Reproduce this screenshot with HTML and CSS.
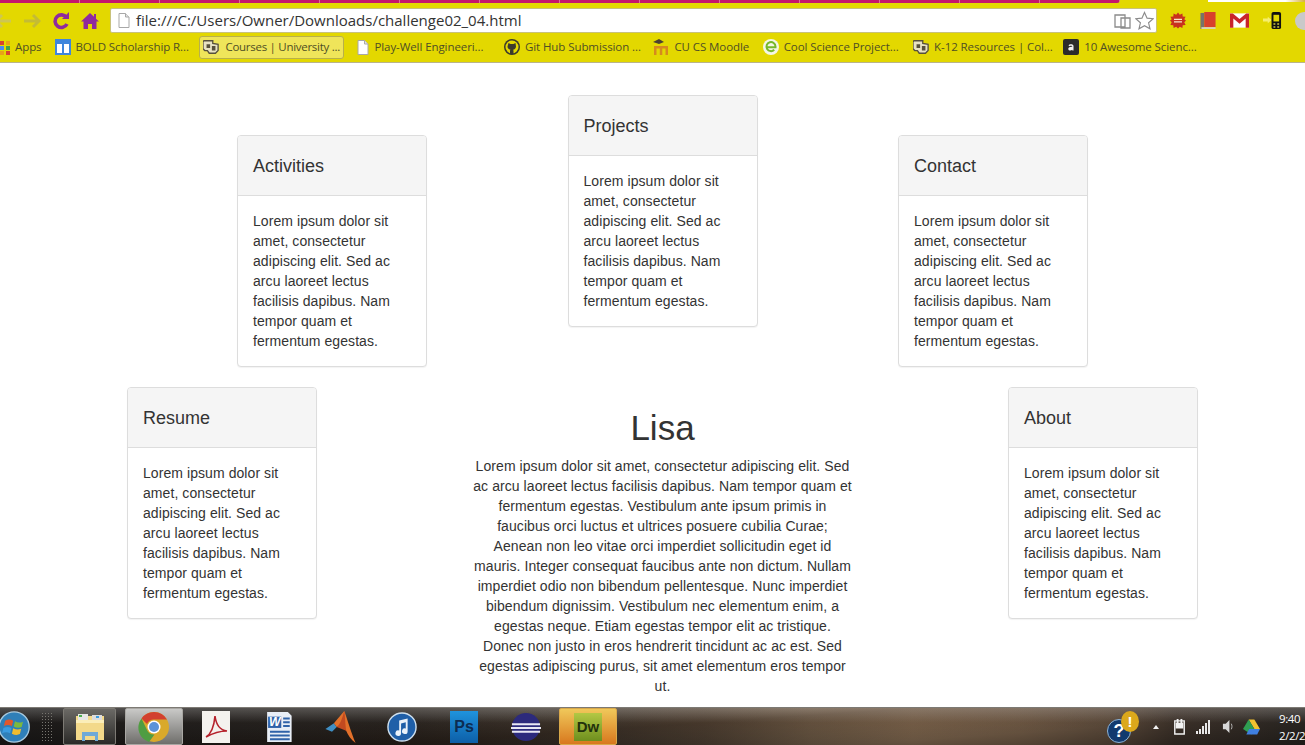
FILE: index.html
```html
<!DOCTYPE html>
<html lang="en">
<head>
  <meta charset="UTF-8" />
  <meta name="viewport" content="width=device-width, initial-scale=1.0" />
  <title>challenge02_04</title>
  <link rel="stylesheet" href="styles.css">
</head>
<body>

<div class="screen">

  <!-- browser chrome -->
  <header class="browser">
    <div class="tabstrip">
      <div class="tabs"></div>
      <div class="tab-corner"></div>
    </div>

    <div class="toolbar">
      <div class="nav-buttons">
        <svg class="nav-icon back" viewBox="0 0 18 16"><path d="M8 2 2 8l6 6M2 8h15" fill="none" stroke="#cdc652" stroke-width="3"/></svg>
        <svg class="nav-icon forward" viewBox="0 0 18 16"><path d="M10 2l6 6-6 6M16 8H1" fill="none" stroke="#c4bb34" stroke-width="3"/></svg>
        <svg class="nav-icon reload" viewBox="0 0 18 18"><path d="M14.5 5.5A6.3 6.3 0 1 0 15 12" fill="none" stroke="#8f2a9e" stroke-width="3.6"/><path d="M10 7h7V0z" fill="#8f2a9e"/></svg>
        <svg class="nav-icon home" viewBox="0 0 18 18"><path d="M9 1 0 9.500h2.500V17h4.500v-5h4v5h4.500V9.500H18L15 6.700V2h-2v2.800z" fill="#8f2a9e"/></svg>
      </div>

      <div class="omnibox">
        <svg class="doc-icon" viewBox="0 0 12 15"><path d="M1 .5h6.500L11 4v10.500H1z" fill="#fff" stroke="#a8a8a8"/><path d="M7.500.5V4H11" fill="#e4e4e4" stroke="#a8a8a8"/></svg>
        <span class="url">file:///C:/Users/Owner/Downloads/challenge02_04.html</span>
        <svg class="omni-icon" viewBox="0 0 17 16"><path d="M1 2h10v12H1zM7 5h9v10H7z" fill="#fff" stroke="#8b8b8b" stroke-width="1.300"/></svg>
        <svg class="omni-icon star" viewBox="0 0 20 19"><path d="M10 1l2.700 6 6.500.6-4.900 4.300 1.500 6.300L10 14.900 4.200 18.200l1.500-6.300L.8 7.600 7.300 7z" fill="#fff" stroke="#8b8b8b" stroke-width="1.200"/></svg>
      </div>

      <div class="extensions">
        <svg class="ext" viewBox="0 0 16 16"><path d="M8 0l1.800 2.300L12.400 1l.3 2.900 2.900.3-1.300 2.600L16 8l-1.700 1.800 1.300 2.600-2.900.3-.3 2.900-2.600-1.300L8 16l-1.800-1.700-2.600 1.300-.3-2.900-2.900-.3 1.300-2.600L0 8l1.700-1.200L.4 4.200l2.900-.3.3-2.900 2.600 1.300z" fill="#c8321e"/><path d="M4 6.200h8v1.300H4zM4 8.700h8V10H4z" fill="#f6e7c8"/></svg>
        <svg class="ext" viewBox="0 0 16 18"><path d="M0 1h4v17H0z" fill="#77726a"/><path d="M4 0h12v16H4z" fill="#d8402c"/><path d="M1 16h15v2H1z" fill="#d9d2b8"/></svg>
        <svg class="ext gmail" viewBox="0 0 20 15"><path d="M0 0h20v15H0z" fill="#fff"/><path d="M0 0h3l7 6 7-6h3v15h-3.500V5.500L10 11 3.500 5.500V15H0z" fill="#c9252b"/></svg>
        <svg class="ext phone" viewBox="0 0 20 20"><path d="M0 8h5V6l4 3.500L5 13v-2H0z" fill="#f5ee70"/><rect x="9" y="1" width="10" height="18" rx="2" fill="#111"/><path d="M11 4h6v7h-6z" fill="#e3d800"/><path d="M11 13h2v1.500h-2zM15 13h2v1.500h-2zM11 16h2v1.500h-2zM15 16h2v1.500h-2z" fill="#cfc640"/></svg>
        <div class="ext-cut"></div>
      </div>
    </div>

    <nav class="bookmarks">
      <a class="bookmark">
        <svg class="fav" viewBox="0 0 16 16"><path d="M0 2h4v4H0z" fill="#d8432f"/><path d="M6 2h4v4H6z" fill="#d8432f"/><path d="M12 2h4v4h-4z" fill="#e8a317"/><path d="M0 7h4v4H0z" fill="#4a8af0"/><path d="M6 7h4v4H6z" fill="#4a8af0"/><path d="M12 7h4v4h-4z" fill="#43a047"/><path d="M0 12h4v4H0z" fill="#e8a317"/><path d="M6 12h4v4H6z" fill="#e8a317"/><path d="M12 12h4v4h-4z" fill="#d8432f"/></svg>
        Apps
      </a>
      <a class="bookmark">
        <svg class="fav" viewBox="0 0 16 16"><path d="M0 0h16v16H0z" fill="#3f86dc"/><path d="M2 5h5v9H2zM9 5h5v9H9z" fill="#fff"/></svg>
        BOLD Scholarship R...
      </a>
      <a class="bookmark active">
        <svg class="fav" viewBox="0 0 18 16"><path d="M1 1h10v3l6 1v7l-3 3H7l-2-3H2L0 10V2z" fill="#e8e2c4" stroke="#57503c" stroke-width="1.500"/><path d="M4 5h4v4H4zM10 7h4v5h-4z" fill="#57503c"/></svg>
        Courses | University ...
      </a>
      <a class="bookmark">
        <svg class="fav small" viewBox="0 0 12 15"><path d="M1 .5h6.500L11 4v10.500H1z" fill="#fff" stroke="#a8a8a8"/><path d="M7.500.5V4H11" fill="#e4e4e4" stroke="#a8a8a8"/></svg>
        Play-Well Engineeri...
      </a>
      <a class="bookmark">
        <svg class="fav" viewBox="0 0 16 16"><circle cx="8" cy="8" r="8" fill="#3b3a2c"/><circle cx="8" cy="8" r="6.500" fill="#e3d800"/><path d="M4.500 4l2 1h3l2-1 .5 3.500c0 2-1.500 3-3 3.300l.5.700V15H6v-3.500l.5-.7c-1.500-.3-3-1.300-3-3.300z" fill="#3b3a2c"/></svg>
        Git Hub Submission ...
      </a>
      <a class="bookmark">
        <svg class="fav" viewBox="0 0 16 16"><path d="M0 3l6-3 5 3-5 2z" fill="#4a4032"/><path d="M1 7h14v9h-2.500V9.500H9.300V16H6.800V9.500H3.500V16H1z" fill="#d68a1e"/></svg>
        CU CS Moodle
      </a>
      <a class="bookmark">
        <svg class="fav" viewBox="0 0 16 16"><circle cx="8" cy="8" r="8" fill="#f4f6e6"/><path d="M3.500 8.300h9V7.500a4.500 4.500 0 1 0-1.300 3.300" fill="none" stroke="#76b82a" stroke-width="2"/></svg>
        Cool Science Project...
      </a>
      <a class="bookmark">
        <svg class="fav" viewBox="0 0 18 16"><path d="M1 1h10v3l6 1v7l-3 3H7l-2-3H2L0 10V2z" fill="#e8e2c4" stroke="#57503c" stroke-width="1.500"/><path d="M4 5h4v4H4zM10 7h4v5h-4z" fill="#57503c"/></svg>
        K-12 Resources | Col...
      </a>
      <a class="bookmark">
        <svg class="fav" viewBox="0 0 16 16"><rect width="16" height="16" rx="2" fill="#2b2b2b"/><path d="M5.500 6.500c.5-1.500 5-1.800 5 .5v4.500H9.300v-.7c-1 1.200-4 1.200-4-.8s2.500-2.200 4-2.200c0-1.300-1.800-1.300-2.700-.6z" fill="#f2f2f2"/></svg>
        10 Awesome Scienc...
      </a>
    </nav>
  </header>

  <!-- the page itself -->
  <main class="page">
    <div class="row top-row">
      <section class="panel lower">
        <div class="panel-heading">Activities</div>
        <div class="panel-body">Lorem ipsum dolor sit amet, consectetur adipiscing elit. Sed ac arcu laoreet lectus facilisis dapibus. Nam tempor quam et fermentum egestas.</div>
      </section>
      <section class="panel">
        <div class="panel-heading">Projects</div>
        <div class="panel-body">Lorem ipsum dolor sit amet, consectetur adipiscing elit. Sed ac arcu laoreet lectus facilisis dapibus. Nam tempor quam et fermentum egestas.</div>
      </section>
      <section class="panel lower">
        <div class="panel-heading">Contact</div>
        <div class="panel-body">Lorem ipsum dolor sit amet, consectetur adipiscing elit. Sed ac arcu laoreet lectus facilisis dapibus. Nam tempor quam et fermentum egestas.</div>
      </section>
    </div>

    <div class="row bottom-row">
      <section class="panel">
        <div class="panel-heading">Resume</div>
        <div class="panel-body">Lorem ipsum dolor sit amet, consectetur adipiscing elit. Sed ac arcu laoreet lectus facilisis dapibus. Nam tempor quam et fermentum egestas.</div>
      </section>
      <div class="intro">
        <h1>Lisa</h1>
        <p>Lorem ipsum dolor sit amet, consectetur adipiscing elit. Sed ac arcu laoreet lectus facilisis dapibus. Nam tempor quam et fermentum egestas. Vestibulum ante ipsum primis in faucibus orci luctus et ultrices posuere cubilia Curae; Aenean non leo vitae orci imperdiet sollicitudin eget id mauris. Integer consequat faucibus ante non dictum. Nullam imperdiet odio non bibendum pellentesque. Nunc imperdiet bibendum dignissim. Vestibulum nec elementum enim, a egestas neque. Etiam egestas tempor elit ac tristique. Donec non justo in eros hendrerit tincidunt ac ac est. Sed egestas adipiscing purus, sit amet elementum eros tempor ut.</p>
      </div>
      <section class="panel">
        <div class="panel-heading">About</div>
        <div class="panel-body">Lorem ipsum dolor sit amet, consectetur adipiscing elit. Sed ac arcu laoreet lectus facilisis dapibus. Nam tempor quam et fermentum egestas.</div>
      </section>
    </div>
  </main>

  <!-- windows taskbar -->
  <footer class="taskbar">
    <div class="start">
      <svg viewBox="0 0 36 36"><circle cx="17" cy="18" r="17" fill="#2f7fb8" stroke="#a9cbe0" stroke-width="1.500"/><path d="M7 11c3-2 6-2 9 0l-1.500 6c-3-1.500-6-1.500-9 0z" fill="#e2572b"/><path d="M18 11.500c3 2 6 2 9 .5l-1.500 6c-3 1.500-6 1-9-.5z" fill="#7cb93e"/><path d="M5 19c3-1.500 6-1.500 9 0l-1.500 6c-3-1.500-6-1.500-9 0z" fill="#3a9be0"/><path d="M16 19.500c3 1.500 6 2 9 .5l-1.500 6c-3 1.500-6 1-9-.5z" fill="#f1bc2e"/></svg>
      <div class="grip"></div>
    </div>

    <div class="task-btn explorer">
      <svg viewBox="0 0 32 30"><path d="M2 4h28v24H2z" fill="#f3d98a"/><path d="M4 2h10v6H4z" fill="#e6e6e6"/><path d="M5 3h3v2H5z" fill="#4caf50"/><path d="M18 3h10v5H18z" fill="#dcdcdc"/><path d="M22 4h3v2h-3z" fill="#3a9be0"/><path d="M2 8h28v3H2z" fill="#fbeeb9"/><path d="M8 20h16v9h-3v-5H11v5H8z" fill="#6ea9d6"/></svg>
    </div>

    <div class="task-btn chrome">
      <svg viewBox="0 0 32 32"><circle cx="16" cy="16" r="15" fill="#d9a92b"/><path d="M16 1a15 15 0 0 1 13 7.500H16a7.500 7.500 0 0 0-7 4.500L3.500 7.500A15 15 0 0 1 16 1z" fill="#d2402f"/><path d="M3.500 7.500 9.500 20a7.500 7.500 0 0 0 7 3.500L11 31A15 15 0 0 1 3.500 7.500z" fill="#4f9d42"/><circle cx="16" cy="16" r="6.500" fill="#fff"/><circle cx="16" cy="16" r="5" fill="#5b93d8"/></svg>
    </div>

    <svg class="task-icon acrobat" viewBox="0 0 28 32"><path d="M0 0h28v32H0z" fill="#f4f2ee"/><path d="M4 26c5-3 8-10 9-21 1 8 4 14 12 15-7 0-12 1-21 6z" fill="none" stroke="#b5222c" stroke-width="1.600"/></svg>
    <svg class="task-icon word" viewBox="0 0 32 34"><path d="M5 1h22l4 4v28H5z" fill="#e8eef6"/><path d="M6 6h14v12H6z" fill="#2f62a8"/><path d="M8 21h21v2H8zM8 25h21v2H8zM8 29h21v2H8z" fill="#2f62a8"/><path d="M22 7h7v2h-7zM22 11h7v2h-7zM22 15h7v2h-7z" fill="#2f62a8"/><text x="13" y="16" text-anchor="middle" font-family="Liberation Sans" font-weight="bold" font-style="italic" font-size="13" fill="#fff">W</text></svg>
    <svg class="task-icon matlab" viewBox="0 0 32 34"><path d="M0 19l9-6 3 4-5 5z" fill="#3f8fc4"/><path d="M9 13 20 0c3 8 7 22 12 34-5-4-8-8-10-13-3-4-6-6-10-4z" fill="#e2702a"/><path d="M20 0c-2 7-4 14-8 17l10 4c-1-7-1-14-2-21z" fill="#c24a20"/></svg>
    <svg class="task-icon itunes" viewBox="0 0 32 32"><circle cx="16" cy="16" r="15" fill="#1f5fa8" stroke="#cfe0ee" stroke-width="1.500"/><path d="M13 9l9-2v13.500a3 3 0 1 1-2-2.800V11l-5 1.200v10.300a3 3 0 1 1-2-2.800z" fill="#eaf2fa"/></svg>
    <div class="task-icon ps"><span>Ps</span></div>
    <svg class="task-icon eclipse" viewBox="0 0 32 32"><circle cx="16" cy="16" r="15" fill="#2c2a7c"/><path d="M1 12h30v2H1zM0 16h32v2H0zM1 20h30v2H1z" fill="#e8e8f4"/></svg>

    <div class="task-btn dreamweaver"><span>Dw</span></div>

    <div class="tray">
      <div class="help">
        <span class="help-q">?</span>
        <span class="help-bang">!</span>
      </div>
      <span class="tray-up"></span>
      <svg class="tray-icon power" viewBox="0 0 12 18"><path d="M1 3h10v14H1z" fill="none" stroke="#f2f2f2" stroke-width="1.500"/><path d="M3 1h2v5H3zM7 1h2v5H7zM2 5h8v6H2z" fill="#f2f2f2"/></svg>
      <svg class="tray-icon signal" viewBox="0 0 14 14"><path d="M0 11h2v3H0zM3 9h2v5H3zM6 6h2v8H6zM9 3h2v11H9zM12 0h2v14h-2z" fill="#e8e8e8"/></svg>
      <svg class="tray-icon speaker" viewBox="0 0 14 16"><path d="M1 5h3l4-4v14l-4-4H1z" fill="#d8d8d8"/><path d="M10 5c1 2 1 4 0 6" fill="none" stroke="#bdbdbd"/></svg>
      <svg class="tray-icon drive" viewBox="0 0 18 16"><path d="M6 0h6l6 10h-6z" fill="#f2c230"/><path d="M6 0l6 10-3 6L0 10z" fill="#2f9e52"/><path d="M3.500 16l3-6H18l-3 6z" fill="#3f7fe0"/></svg>
      <div class="clock">
        <span>9:40</span>
        <span>2/2/2</span>
      </div>
    </div>
  </footer>

</div>

</body>
</html>
```

FILE: styles.css
```css
body {
  margin: 0;
  font-family: "Liberation Sans", Arial, sans-serif;
  font-size: 14px;
  line-height: 20px;
  color: #333;
  background: #fff;
}

.screen {
  height: 100vh;
  display: flex;
  flex-direction: column;
  overflow: hidden;
}

/* browser chrome */

.browser {
  flex: none;
  height: 63px;
  background: #e3d800;
  border-bottom: 1px solid #b9b48c;
  box-sizing: border-box;
}

.tabstrip {
  height: 3px;
  display: flex;
  justify-content: space-between;
}

.tabs {
  width: 1120px;
  background: repeating-linear-gradient(to right, #c5156c 0, #c5156c 79px, #d96aa2 79px, #d96aa2 80px);
  border-radius: 0 0 5px 0;
}

.tab-corner {
  width: 97px;
  height: 2px;
  background: linear-gradient(to right, #fff 80%, #d8b23c);
}

.toolbar {
  height: 25px;
  display: flex;
  align-items: center;
  margin-top: 5px;
}

.nav-buttons {
  width: 118px;
  flex: none;
  display: flex;
  align-items: center;
  margin-left: -6px;
  margin-right: -2px;
  gap: 11px;
}

.nav-icon {
  width: 18px;
  height: 18px;
  flex: none;
}

.omnibox {
  width: 1047px;
  height: 25px;
  box-sizing: border-box;
  flex: none;
  display: flex;
  align-items: center;
  background: #fff;
  border: 1px solid #c9c27a;
  border-radius: 2px;
  padding: 0 2px 0 7px;
}

.doc-icon {
  width: 12px;
  height: 15px;
  flex: none;
}

.url {
  flex: 1;
  margin-left: 6px;
  padding-bottom: 2px;
  font-family: "Open Sans", sans-serif;
  font-size: 15px;
  color: #333;
  white-space: nowrap;
}

.omni-icon {
  width: 17px;
  height: 16px;
  flex: none;
}

.omni-icon.star {
  width: 19px;
  height: 19px;
  margin-left: 4px;
}

.extensions {
  flex: 1;
  display: flex;
  align-items: center;
  padding-left: 13px;
  gap: 14px;
}

.ext {
  width: 16px;
  height: 17px;
  flex: none;
}

.ext.gmail {
  width: 19px;
  height: 15px;
}

.ext.phone {
  width: 19px;
  height: 19px;
}

.ext-cut {
  width: 18px;
  height: 18px;
  border-radius: 50%;
  background: #c9c9c9;
  flex: none;
  margin-left: -1px;
}

.bookmarks {
  height: 26px;
  display: flex;
  align-items: center;
  margin: 1px 0 0 -12px;
  font-family: "Open Sans", sans-serif;
  font-size: 11.5px;
  letter-spacing: -0.08px;
  color: #4f4f24;
  white-space: nowrap;
}

.bookmark {
  height: 23px;
  display: flex;
  align-items: center;
  gap: 5px;
  padding: 0 6px;
  margin-right: 1px;
  box-sizing: border-box;
}

.bookmark:nth-child(2) { margin-right: 4.5px; }
.bookmark:nth-child(3) { margin-right: 7.5px; }
.bookmark:nth-child(4) { margin-right: 8.5px; }
.bookmark:nth-child(5) { margin-right: 0.5px; }
.bookmark:nth-child(6) { margin-right: 1.5px; }
.bookmark:nth-child(7) { margin-right: 2.5px; }
.bookmark:nth-child(8) { margin-right: -1.5px; }

.bookmark.active {
  gap: 6px;
  letter-spacing: -0.28px;
  background: #efe55a;
  border: 1px solid #b8b04a;
  border-radius: 3px;
  padding: 0 3px 0 3px;
}

.fav {
  width: 16px;
  height: 16px;
  flex: none;
}

.fav.small {
  width: 12px;
  height: 15px;
}

/* page */

.page {
  flex: 1;
  min-height: 0;
  overflow: hidden;
  padding: 32px 0 0 20px;
}

.row {
  display: flex;
  justify-content: center;
  align-items: flex-start;
}

.top-row {
  gap: 140.5px;
  margin-bottom: 20px;
}

.bottom-row {
  gap: 155.5px;
}

.panel {
  width: 190px;
  flex: none;
  box-sizing: border-box;
  background: #fff;
  border: 1px solid #ddd;
  border-radius: 4px;
  box-shadow: 0 1px 1px rgba(0, 0, 0, 0.05);
}

.panel.lower {
  margin-top: 40px;
}

.panel-heading {
  height: 60px;
  box-sizing: border-box;
  padding: 20px 15px 0;
  font-size: 18px;
  background: #f5f5f5;
  border-bottom: 1px solid #ddd;
  border-radius: 3px 3px 0 0;
}

.panel-body {
  padding: 15px;
  height: 140px;
  letter-spacing: 0.07px;
}

.intro {
  width: 380px;
  flex: none;
  text-align: center;
}

.intro h1 {
  margin: 21px 0 8px;
  font-size: 35px;
  font-weight: 500;
  line-height: 40px;
}

.intro p {
  margin: 0;
  letter-spacing: 0.07px;
}

/* taskbar */

.taskbar {
  flex: none;
  height: 38px;
  display: flex;
  align-items: center;
  border-top: 1px solid #7d7a74;
  box-sizing: border-box;
  background:
    linear-gradient(to bottom, rgba(255, 255, 255, 0.22), rgba(0, 0, 0, 0.05) 40%, rgba(0, 0, 0, 0.3)),
    linear-gradient(176deg, transparent 30%, rgba(40, 25, 15, 0.35) 50%, transparent 75%),
    linear-gradient(to right, #1d1b1a 0, #2a2521 30%, #4a4036 47%, #5c4d3e 54%, #7d6851 62%, #8a7056 70%, #77604a 78%, #5e4c3c 85%, #3d322a 90%, #2a2622 100%);
  color: #fff;
}

.start {
  width: 64px;
  flex: none;
  margin-left: -1px;
  display: flex;
  align-items: center;
}

.start svg {
  width: 32px;
  height: 34px;
  flex: none;
  display: block;
}

.grip {
  width: 12px;
  height: 30px;
  margin-left: 10px;
  background: radial-gradient(circle, #77756f 0.6px, transparent 0.8px) 0 0 / 3px 3px;
}

.task-btn {
  height: 37px;
  box-sizing: border-box;
  display: flex;
  align-items: center;
  justify-content: center;
  flex: none;
  border-radius: 2px;
}

.task-btn svg {
  width: 32px;
  height: 32px;
}

.explorer {
  width: 53px;
  margin-right: 9px;
  border: 1px solid #7d7a74;
  background: linear-gradient(to bottom, #6b6965, #2b2a28);
}

.chrome {
  width: 58px;
  margin-right: 19px;
  border: 1px solid #a9a7a3;
  background: linear-gradient(to bottom, #c9c9c7, #6f6e6b);
}

.task-icon {
  flex: none;
  width: 28px;
  height: 32px;
  margin-right: 32px;
}

.word {
  width: 31px;
  margin-right: 32px;
}

.matlab {
  width: 31px;
  margin-right: 31px;
}

.itunes {
  width: 30px;
  margin-right: 33px;
}

.ps {
  margin-right: 33px;
  background: linear-gradient(to bottom, #1f93dd, #0d5fa8);
  display: flex;
  align-items: center;
  justify-content: center;
  font-weight: bold;
  font-size: 16px;
  color: #0c2c52;
}

.eclipse {
  width: 30px;
  margin-right: 18px;
}

.dreamweaver {
  width: 58px;
  border: 1px solid #d9a84a;
  background: linear-gradient(to bottom, #f0c85a, #d8781e);
}

.dreamweaver span {
  width: 28px;
  height: 28px;
  display: block;
  text-align: center;
  font-weight: bold;
  font-size: 15px;
  line-height: 28px;
  color: #23310c;
  background: linear-gradient(to bottom, #b3c844, #6e8f1e);
}

.tray {
  margin-left: auto;
  display: flex;
  align-items: center;
  flex: none;
}

.help {
  width: 32px;
  height: 32px;
  position: relative;
}

.help-q {
  position: absolute;
  left: 0;
  bottom: 0;
  width: 24px;
  height: 24px;
  border-radius: 50%;
  background: #123a6e;
  border: 1px solid #8fb4d6;
  box-sizing: border-box;
  text-align: center;
  font-weight: bold;
  font-size: 18px;
  line-height: 23px;
}

.help-bang {
  position: absolute;
  right: 0;
  top: 0;
  width: 18px;
  height: 21px;
  border-radius: 50%;
  background: #dba81c;
  text-align: center;
  font-weight: bold;
  font-size: 15px;
  line-height: 21px;
}

.tray-up {
  width: 0;
  height: 0;
  margin-left: 14px;
  border-left: 3px solid transparent;
  border-right: 3px solid transparent;
  border-bottom: 4px solid #f2f2f2;
}

.tray-icon {
  width: 13px;
  height: 17px;
  flex: none;
}

.power {
  margin-left: 14px;
}

.signal {
  width: 14px;
  height: 14px;
  margin-left: 10px;
}

.speaker {
  margin-left: 12px;
}

.drive {
  width: 17px;
  height: 16px;
  margin-left: 8px;
}

.clock {
  width: 26px;
  display: flex;
  flex-direction: column;
  align-items: flex-start;
  margin-left: 19px;
  font-family: "Open Sans", sans-serif;
  font-size: 11.5px;
  letter-spacing: -0.4px;
  line-height: 17px;
  white-space: nowrap;
}
```
